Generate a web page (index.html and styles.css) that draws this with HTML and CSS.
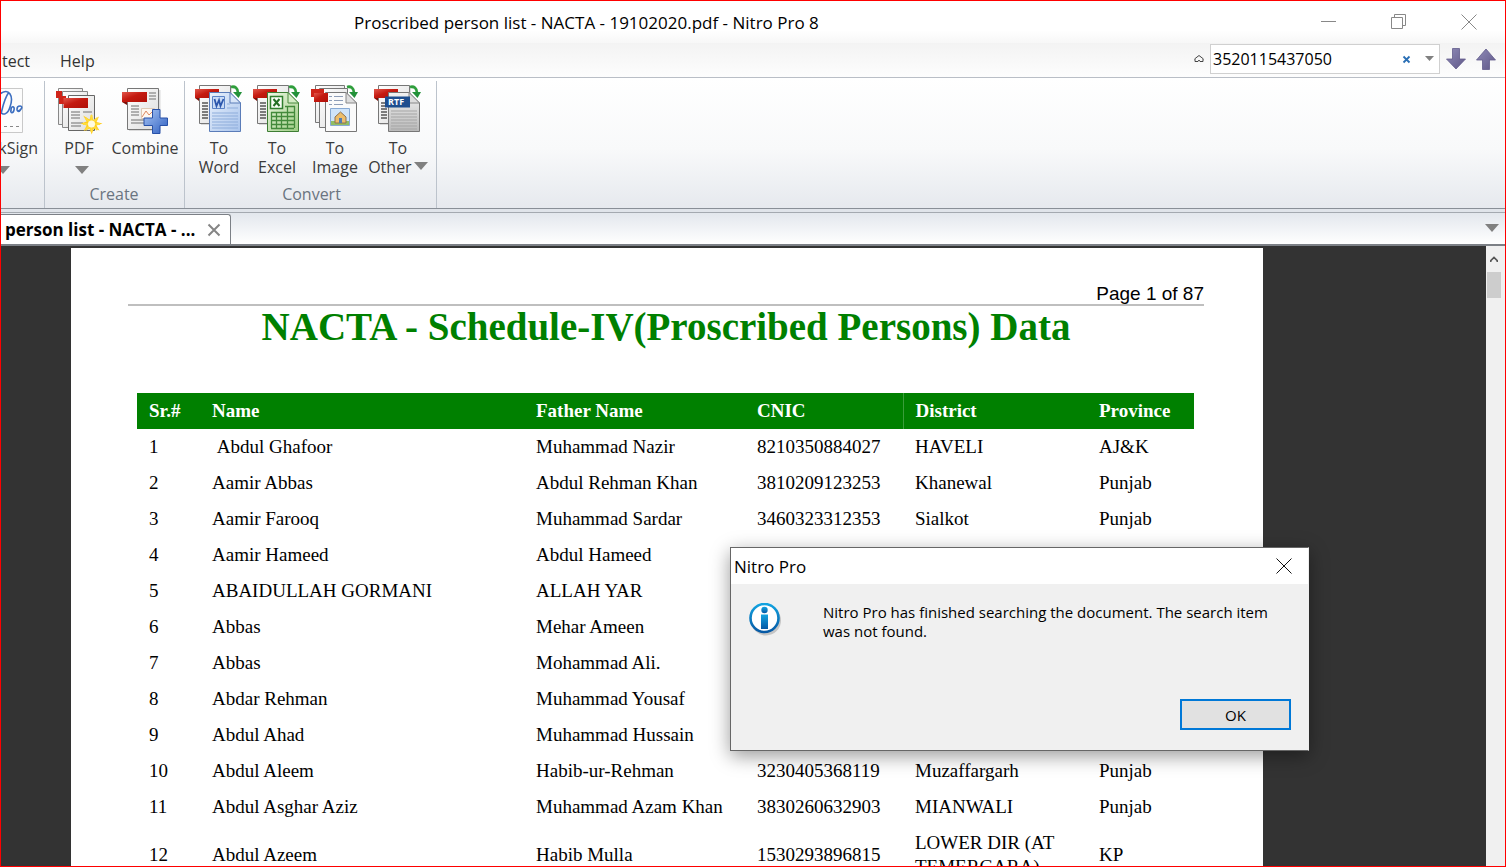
FILE: index.html
```html
<!DOCTYPE html>
<html lang="en">
<head>
<meta charset="utf-8">
<title>Proscribed person list - NACTA - 19102020.pdf - Nitro Pro 8</title>
<link rel="stylesheet" href="styles.css">
</head>
<body>
<svg class="defs" aria-hidden="true">
  <defs>
    <linearGradient id="gRed" x1="0" y1="0" x2="1" y2="1"><stop offset="0" stop-color="#e2574b"/><stop offset=".45" stop-color="#c41a10"/><stop offset="1" stop-color="#b01008"/></linearGradient>
    <linearGradient id="gPage" x1="0" y1="0" x2="1" y2="1"><stop offset="0" stop-color="#fff"/><stop offset="1" stop-color="#dcdcdc"/></linearGradient>
    <linearGradient id="gBlue" x1="0" y1="0" x2="1" y2="1"><stop offset="0" stop-color="#e9f1fc"/><stop offset="1" stop-color="#a9c4ec"/></linearGradient>
    <linearGradient id="gGreen" x1="0" y1="0" x2="1" y2="1"><stop offset="0" stop-color="#eef7e4"/><stop offset="1" stop-color="#9fce86"/></linearGradient>
    <linearGradient id="gGrey" x1="0" y1="0" x2="0" y2="1"><stop offset="0" stop-color="#f2f2f2"/><stop offset="1" stop-color="#b9b9b9"/></linearGradient>
    <linearGradient id="gPlus" x1="0" y1="0" x2="1" y2="1"><stop offset="0" stop-color="#a9c6f5"/><stop offset="1" stop-color="#2e5fc0"/></linearGradient>
    <linearGradient id="gArrow" x1="0" y1="0" x2="1" y2="1"><stop offset="0" stop-color="#8f8bb8"/><stop offset="1" stop-color="#5f5787"/></linearGradient>
    <linearGradient id="gInfo" x1="0" y1="0" x2="0" y2="1"><stop offset="0" stop-color="#12a3e0"/><stop offset="1" stop-color="#0659a5"/></linearGradient>
    <g id="source">
      <path d="M7 3H38V41H7z" fill="#bbb" opacity=".5"/>
      <path d="M5.500 1.500H36.500V39.500H5.500z" fill="url(#gPage)" stroke="#777"/>
      <path d="M8 19h6M8 22h6M8 25h6M8 28h6M8 31h6M8 34h6" stroke="#555" stroke-width="1.300"/>
      <path d="M1 5H25V14H1z" fill="url(#gRed)"/>
      <path d="M1 14h4v3z" fill="#7d0d07"/>
    </g>
    <g id="turn">
      <path d="M37 3c4-1 7 1 7 6" fill="none" stroke="#2f9e3c" stroke-width="2.800"/>
      <path d="M39 8h9L44.500 14z" fill="#23913a"/>
    </g>
    <path id="sheet" d="M15.500 8.500H36l10.500 10.500V47.500H15.500z"/>
    <path id="fold" d="M36 8.500V19H46.500z"/>
  </defs>
</svg>

<div class="window">
  <header class="titlebar">
    <h1 class="window-title">Proscribed person list - NACTA - 19102020.pdf - Nitro Pro 8</h1>
    <div class="window-controls">
      <button aria-label="Minimize"><svg width="16" height="16" viewBox="0 0 16 16"><path d="M0 7.500h15"/></svg></button>
      <button aria-label="Restore"><svg width="16" height="16" viewBox="0 0 16 16"><path d="M.5 3.500h11v11H.5zM3.500 3V.5h11v11H12"/></svg></button>
      <button aria-label="Close"><svg width="16" height="16" viewBox="0 0 16 16"><path d="M.5.5l15 15M15.500.5l-15 15"/></svg></button>
    </div>
  </header>

  <nav class="menubar">
    <div class="menus"><button>tect</button><button>Help</button></div>
    <div class="search">
      <button class="collapse" aria-label="Collapse ribbon"><svg width="10" height="10" viewBox="0 0 10 10"><path d="M.5 5L5 1.500 9.500 5M1 5v2.500h3L5 6l1 1.500h3V5" fill="none" stroke="#444"/></svg></button>
      <div class="search-box">
        <input type="text" aria-label="Find" value="3520115437050">
        <button aria-label="Clear"><svg width="9" height="9" viewBox="0 0 9 9"><path d="M1.500 1.500l6 6M7.500 1.500l-6 6" stroke="#2a6fb5" stroke-width="1.800"/></svg></button>
        <button aria-label="Search options"><svg width="9" height="6" viewBox="0 0 9 6"><path d="M0 0h9L4.500 5z" fill="#808080"/></svg></button>
      </div>
      <button aria-label="Find next"><svg width="20" height="22" viewBox="0 0 20 22"><path d="M6.500.5h7v10.500h6L10 21 .5 11h6z" fill="url(#gArrow)" stroke="#625c8c" stroke-width=".8"/></svg></button>
      <button aria-label="Find previous"><svg width="20" height="22" viewBox="0 0 20 22"><path d="M6.500 21.500h7V12h6L10 1 .5 12h6z" fill="url(#gArrow)" stroke="#625c8c" stroke-width=".8"/></svg></button>
    </div>
  </nav>

  <section class="ribbon">
    <div class="group sign">
      <div class="tools">
        <button class="tool">
          <svg width="48" height="52" viewBox="0 0 48 52"><path d="M0 4.500H32.500V48.500H0z" fill="#fcfcfc" stroke="#c9c9c9"/><path d="M10 10c9-7 14 2 10 13-2 7-7 9-9 5M19 8c-5 7-6 14-8 22M21 27c0-6 4-5 3-1s-4 3-3 0M30 22c-4 0-4 7 0 5M28 27c4-1 5-5 2-5" fill="none" stroke="#3d6fc0" stroke-width="1.600"/><path d="M2 42.500h28" stroke="#888" stroke-dasharray="3 3"/></svg>
          <span>kSign</span>
          <svg class="caret" width="14" height="8" viewBox="0 0 14 8"><path d="M0 0h14L7 8z"/></svg>
        </button>
      </div>
      <div class="caption"></div>
    </div>
    <div class="group create">
      <div class="tools">
        <button class="tool wide">
          <svg width="48" height="52" viewBox="0 0 48 52">
            <g fill="url(#gPage)" stroke="#888"><path d="M3.500 4.500H27.500V40.500H3.500z"/><path d="M7.500 7.500H32.500V43.500H7.500z"/><path d="M13.500 11.500H39.500V46.500H13.500z" stroke="#666"/></g>
            <path d="M1 7h6v7H1zM4 12h7v8H4z" fill="#cf2419"/><path d="M8.500 14H33v10H8.500z" fill="url(#gRed)"/>
            <path d="M16 28h9M16 31h9M16 34h9M16 39h12M16 42h10M28 28h9" stroke="#999" stroke-width="1.300"/>
            <path d="M36.500 30l1.800 6 5.700-3.500-2.500 5.500 6 1.500-6 2 3 5-5.800-2-2 6-2-6-6 2.500 3-5.500-6-2 6-2-3.500-6 6.300 4z" fill="#ffce1c"/><path d="M36.500 31v17M28 40h17M30.500 34l12 12M42.500 34l-12 12" stroke="#ffdc3d" stroke-width="2"/><circle cx="36.500" cy="40" r="3.500" fill="#fffbe0"/>
          </svg>
          <span>PDF</span>
          <svg class="caret" width="14" height="8" viewBox="0 0 14 8"><path d="M0 0h14L7 8z"/></svg>
        </button>
        <button class="tool widest">
          <svg width="48" height="52" viewBox="0 0 48 52">
            <path d="M8 6H39.500V47H8z" fill="#bbb" opacity=".5"/><path d="M6.500 4.500H37.500V45.500H6.500z" fill="url(#gPage)" stroke="#777"/>
            <path d="M10 22h8M10 25h8M10 28h8M10 31h8M10 36h14M10 39h14M28 9h7M28 12h7M28 15h7" stroke="#999" stroke-width="1.300"/>
            <path d="M20.500 24.500h13v10h-13z" fill="#fff8f0" stroke="#ddc9b5"/><path d="M21 33l4-6 3 4 4-4" fill="none" stroke="#dd8961"/>
            <path d="M1 8H26V18H1z" fill="url(#gRed)"/><path d="M1 18h5v3z" fill="#7d0d07"/>
            <path d="M31.500 25.500h7.500v8.500h7.500v7.500H39v8h-7.500v-8H23V34h8.500z" fill="url(#gPlus)" stroke="#2851a8"/>
          </svg>
          <span>Combine</span>
        </button>
      </div>
      <div class="caption">Create</div>
    </div>
    <div class="group convert">
      <div class="tools">
        <button class="tool">
          <svg width="50" height="52" viewBox="0 0 50 52"><use href="#source"/><use href="#sheet" fill="url(#gBlue)" stroke="#5a7cb8"/><use href="#fold" fill="#d8e5f8" stroke="#5a7cb8"/><path d="M18 29h26M18 32h26M18 35h26M18 38h26M18 41h26M18 44h26M33 24h11M33 20h3" stroke="#8eaddb"/><path d="M18.500 12.500h12v12h-12z" fill="#c9dbf6" stroke="#5b83c6"/><path d="M20.500 15l2 7 2.500-6 1.500 6 3-7" fill="none" stroke="#2c57ad" stroke-width="1.800"/><use href="#turn"/></svg>
          <span>To<br>Word</span>
        </button>
        <button class="tool">
          <svg width="50" height="52" viewBox="0 0 50 52"><use href="#source"/><use href="#sheet" fill="url(#gGreen)" stroke="#3d7d34"/><use href="#fold" fill="#d4edc5" stroke="#4a8a3f"/><path d="M19 28.500h23M19 32.500h23M19 36.500h23M19 40.500h23M19 44.500h23M19.500 28v16M24.500 28v16M29.500 28v16M35.500 22v22M42.500 22v22M33 22.500h10" stroke="#438a3b" stroke-width="1.300"/><path d="M18.500 12.500h12v12h-12z" fill="#fafff7" stroke="#2f7e2d" stroke-width="1.500"/><path d="M21.500 15l6 7M27.500 15l-6 7" stroke="#246f24" stroke-width="2"/><use href="#turn"/></svg>
          <span>To<br>Excel</span>
        </button>
        <button class="tool">
          <svg width="50" height="52" viewBox="0 0 50 52"><path d="M5.500 1.500H34.500V38.500H5.500z" fill="url(#gPage)" stroke="#777"/><path d="M9.500 4.500H37.500V43.500H9.500z" fill="url(#gPage)" stroke="#777"/><path d="M1 5h13v8H1z" fill="#cf2419"/><path d="M4 9h12v9H4z" fill="url(#gRed)"/><use href="#sheet" fill="#fafafa" stroke="#777"/><use href="#fold" fill="#ddd" stroke="#888"/><path d="M19 12.500h3M24 12.500h9M19 16.500h3M24 16.500h9M19 20.500h3M24 20.500h9" stroke="#8d9db7"/><path d="M20.500 24.500h19v17h-19z" fill="#cfe4fa" stroke="#87a9d3"/><path d="M21 37h18v4H21z" fill="#91bd63"/><path d="M25 33l5.500-5 5.500 5v6H25z" fill="#edbd6b" stroke="#8c7252"/><path d="M29 34h3v5h-3z" fill="#527cb1"/><path d="M4 9h14v9H4z" fill="url(#gRed)"/><use href="#turn"/></svg>
          <span>To<br>Image</span>
        </button>
        <button class="tool other">
          <svg width="50" height="52" viewBox="0 0 50 52"><use href="#source"/><use href="#sheet" fill="url(#gGrey)" stroke="#777"/><use href="#fold" fill="#ddd" stroke="#888"/><path d="M18 27h26M18 30h26M18 33h26M18 36h26M18 39h26M18 42h26M18 45h26" stroke="#a5a5a5"/><path d="M12 12.500h25v11H12z" fill="#1d4e8f"/><text class="rtf" x="15" y="21">RTF</text><use href="#turn"/></svg>
          <span>To<br>Other <svg class="caret" width="14" height="8" viewBox="0 0 14 8"><path d="M0 0h14L7 8z"/></svg></span>
        </button>
      </div>
      <div class="caption">Convert</div>
    </div>
  </section>

  <div class="tabbar">
    <div class="tab"><span>person list - NACTA - ...</span><button aria-label="Close tab"><svg width="14" height="14" viewBox="0 0 14 14"><path d="M1.500 1.500l11 11M12.500 1.500l-11 11" stroke="#858585" stroke-width="2"/></svg></button></div>
    <button class="tab-list" aria-label="Open documents"><svg class="caret" width="14" height="8" viewBox="0 0 14 8"><path d="M0 0h14L7 8z"/></svg></button>
  </div>

  <main class="viewer">
    <div class="canvas">
      <article class="page">
        <div class="page-number">Page 1 of 87</div>
        <h2>NACTA - Schedule-IV(Proscribed Persons) Data</h2>
        <table>
          <colgroup><col class="c-sr"><col class="c-name"><col class="c-father"><col class="c-cnic"><col class="c-district"><col class="c-province"></colgroup>
          <thead><tr><th>Sr.#</th><th>Name</th><th>Father Name</th><th>CNIC</th><th class="divided">District</th><th>Province</th></tr></thead>
          <tbody>
            <tr><td>1</td><td>&nbsp;Abdul Ghafoor</td><td>Muhammad Nazir</td><td>8210350884027</td><td>HAVELI</td><td>AJ&amp;K</td></tr>
            <tr><td>2</td><td>Aamir Abbas</td><td>Abdul Rehman Khan</td><td>3810209123253</td><td>Khanewal</td><td>Punjab</td></tr>
            <tr><td>3</td><td>Aamir Farooq</td><td>Muhammad Sardar</td><td>3460323312353</td><td>Sialkot</td><td>Punjab</td></tr>
            <tr><td>4</td><td>Aamir Hameed</td><td>Abdul Hameed</td><td>3330261114743</td><td>TOBA TEK SINGH</td><td>Punjab</td></tr>
            <tr><td>5</td><td>ABAIDULLAH GORMANI</td><td>ALLAH YAR</td><td></td><td></td><td></td></tr>
            <tr><td>6</td><td>Abbas</td><td>Mehar Ameen</td><td></td><td></td><td></td></tr>
            <tr><td>7</td><td>Abbas</td><td>Mohammad Ali.</td><td></td><td></td><td></td></tr>
            <tr><td>8</td><td>Abdar Rehman</td><td>Muhammad Yousaf</td><td></td><td></td><td></td></tr>
            <tr><td>9</td><td>Abdul Ahad</td><td>Muhammad Hussain</td><td></td><td></td><td></td></tr>
            <tr><td>10</td><td>Abdul Aleem</td><td>Habib-ur-Rehman</td><td>3230405368119</td><td>Muzaffargarh</td><td>Punjab</td></tr>
            <tr><td>11</td><td>Abdul Asghar Aziz</td><td>Muhammad Azam Khan</td><td>3830260632903</td><td>MIANWALI</td><td>Punjab</td></tr>
            <tr><td>12</td><td>Abdul Azeem</td><td>Habib Mulla</td><td>1530293896815</td><td>LOWER DIR (AT TEMERGARA)</td><td>KP</td></tr>
          </tbody>
        </table>
      </article>
    </div>
    <div class="scrollbar">
      <button aria-label="Scroll up"><svg width="8" height="7" viewBox="0 0 8 7"><path d="M.7 6V4.700L4 1.500l3.300 3.200V6" fill="none" stroke="#555" stroke-width="1.700"/></svg></button>
      <div class="thumb"></div>
    </div>
  </main>
</div>

<div class="dialog" role="dialog" aria-labelledby="dialog-title">
  <div class="dialog-bar">
    <span id="dialog-title">Nitro Pro</span>
    <button aria-label="Close dialog"><svg width="16" height="16" viewBox="0 0 16 16"><path d="M.5.5l15 15M15.500.5l-15 15" stroke="#111"/></svg></button>
  </div>
  <div class="dialog-body">
    <svg width="34" height="34" viewBox="0 0 34 34"><circle cx="17" cy="17.500" r="15" fill="#999" opacity=".5"/><circle cx="15.500" cy="15" r="14" fill="#fff" stroke="url(#gInfo)" stroke-width="2.600"/><circle cx="15.500" cy="7" r="3.200" fill="url(#gInfo)"/><path d="M12 11.500h7V26h-7z" fill="url(#gInfo)"/></svg>
    <p>Nitro Pro has finished searching the document. The search item was not found.</p>
  </div>
  <div class="dialog-actions"><button class="ok">OK</button></div>
</div>
</body>
</html>
```
FILE: styles.css
```css
* { box-sizing: border-box; }

body {
  margin: 0;
  font-family: "Open Sans", "Noto Sans", sans-serif;
  font-size: 16px;
  color: #000;
}

button {
  padding: 0;
  border: 0;
  background: none;
  font: inherit;
  color: inherit;
}

svg { display: block; }
.defs { position: absolute; width: 0; height: 0; }
.caret { fill: #808080; }

.window {
  display: flex;
  flex-direction: column;
  height: 100vh;
  overflow: hidden;
  border: 1px solid #f00;
  background: #fff;
}

/* Title bar */
.titlebar {
  display: flex;
  align-items: center;
  justify-content: space-between;
  height: 42px;
  padding-left: 353px;
  background: linear-gradient(#fff 70%, #f7f7f7);
}
.window-title { margin: 0; font-size: 17px; font-weight: 400; }
.window-controls { display: flex; padding-right: 1px; }
.window-controls button {
  display: grid;
  place-items: center;
  width: 70px;
  height: 42px;
}
.window-controls path { fill: none; stroke: #888; }

/* Menu row */
.menubar {
  display: flex;
  justify-content: space-between;
  height: 35px;
  padding-right: 9px;
  border-bottom: 1px solid #b9bec6;
  background: linear-gradient(#f3f3f3, #fdfdfd);
  color: #333;
}
.menus { display: flex; gap: 30px; padding: 2px 0 0 1px; }
.search { display: flex; align-items: center; gap: 10px; padding-bottom: 2px; }
.collapse { margin-right: -4px; }
.search-box {
  display: flex;
  align-items: center;
  gap: 14px;
  width: 230px;
  height: 30px;
  margin-right: -4px;
  padding: 0 5px 0 2px;
  border: 1px solid #d0d0d0;
  background: #fff;
}
.search-box input {
  flex: 1;
  min-width: 0;
  padding: 0;
  border: 0;
  outline: 0;
  background: none;
  font: inherit;
  color: #000;
}

/* Ribbon */
.ribbon {
  display: flex;
  height: 131px;
  padding-top: 3px;
  border-bottom: 1px solid #898f97;
  background: linear-gradient(#fff, #f8f9fa 55%, #e6e9ee);
  color: #3b3b3b;
}
.group {
  display: flex;
  flex-direction: column;
  justify-content: space-between;
  padding: 3px 4px 2px;
  border-right: 1px solid #bcc3cc;
  overflow: hidden;
}
.sign { width: 44px; align-items: flex-end; padding-right: 6px; }
.sign .tool { width: 48px; align-items: flex-end; }
.sign .caret { margin-right: 28px; }
.create { width: 140px; padding-left: 3px; }
.tools { display: flex; }
.tool {
  display: flex;
  flex-direction: column;
  align-items: center;
  width: 58px;
  line-height: 19px;
}
.tool.wide { width: 62px; }
.tool.widest { width: 70px; }
.tool.other { width: 68px; }
.tool > span { padding-top: 3px; }
.tool > .caret { margin-top: 8px; }
.wide > .caret { margin-left: 6px; }
.tool span .caret { display: inline-block; vertical-align: 3px; margin-left: -2px; }
.convert { width: 252px; padding-left: 5px; padding-right: 3px; }
.caption {
  height: 24px;
  line-height: 24px;
  text-align: center;
  color: #6a7480;
}
.rtf { font: 700 9px "Open Sans", sans-serif; fill: #fff; }

/* Document tabs */
.tabbar {
  display: flex;
  align-items: stretch;
  justify-content: space-between;
  height: 37px;
  padding-right: 6px;
  border-bottom: 2px solid #7c8086;
  background: linear-gradient(#e0e4ea 3px, #a4a9b0 3px, #a4a9b0 4px, #e3e7ed 4px, #fff);
}
.tab {
  display: flex;
  align-items: center;
  justify-content: space-between;
  margin-top: 5px;
  padding: 0 9px 0 4px;
  width: 230px;
  border: 1px solid #7c8086;
  border-width: 1px 1px 0 0;
  border-radius: 0 3px 0 0;
  background: #fff;
  font-size: 17px;
  font-weight: 700;
  line-height: 24px;
  white-space: nowrap;
}
.tab-list { padding-top: 3px; }

/* Document view */
.viewer { display: flex; flex: 1; min-height: 0; background: #333; }
.canvas { flex: 1; padding: 2px 223px 0 70px; overflow: hidden; }
.page {
  height: 100%;
  padding: 35px 59px 0 57px;
  background: #fff;
  font-family: "Liberation Serif", serif;
  overflow: hidden;
}
.page-number {
  border-bottom: 2px solid #bfbfbf;
  font: 19px/21px "Liberation Sans", sans-serif;
  text-align: right;
}
.page h2 {
  margin: 0;
  font-size: 39px;
  line-height: 42px;
  text-align: center;
  color: #008000;
}
table {
  width: calc(100% - 19px);
  margin: 45px 10px 0 9px;
  border-collapse: collapse;
  table-layout: fixed;
  font-size: 19px;
  line-height: 24px;
}
/* Proportional widths: a fixed table scales them to its own width */
.c-sr { width: 63px; }
.c-name { width: 324px; }
.c-father { width: 221px; }
.c-cnic { width: 158px; }
.c-district { width: 184px; }
.c-province { width: 107px; }
th { background: #008000; color: #fff; text-align: left; }
th, td { height: 36px; padding: 6px 0 6px 12px; }
th.divided { border-left: 1px solid #3a9d3a; }

.scrollbar {
  display: flex;
  flex-direction: column;
  align-items: center;
  width: 19px;
  padding-right: 3px;
  background: #f0f0f0;
}
.scrollbar button { height: 26px; }
.thumb { width: 14px; height: 26px; background: #cdcdcd; }

/* Message box floating over the document */
.dialog {
  position: absolute;
  left: 730px;
  top: 547px;
  width: 579px;
  border: 1px solid #666;
  border-right-color: #eee;
  background: #f0f0f0;
  box-shadow: 0 5px 18px rgba(0, 0, 0, .4);
}
.dialog-bar {
  display: flex;
  align-items: center;
  justify-content: space-between;
  height: 36px;
  padding: 0 16px 0 3px;
  background: #fff;
  font-size: 17px;
}
.dialog-body {
  display: flex;
  gap: 40px;
  height: 115px;
  padding: 19px 24px 0 18px;
}
.dialog-body p { flex: 1; margin: 0; font-size: 15px; line-height: 19px; }
.dialog-actions { display: flex; justify-content: flex-end; padding: 0 17px 20px; }
.ok {
  width: 111px;
  height: 31px;
  border: 2px solid #0078d7;
  background: #e1e1e1;
  font-size: 15px;
}
```
